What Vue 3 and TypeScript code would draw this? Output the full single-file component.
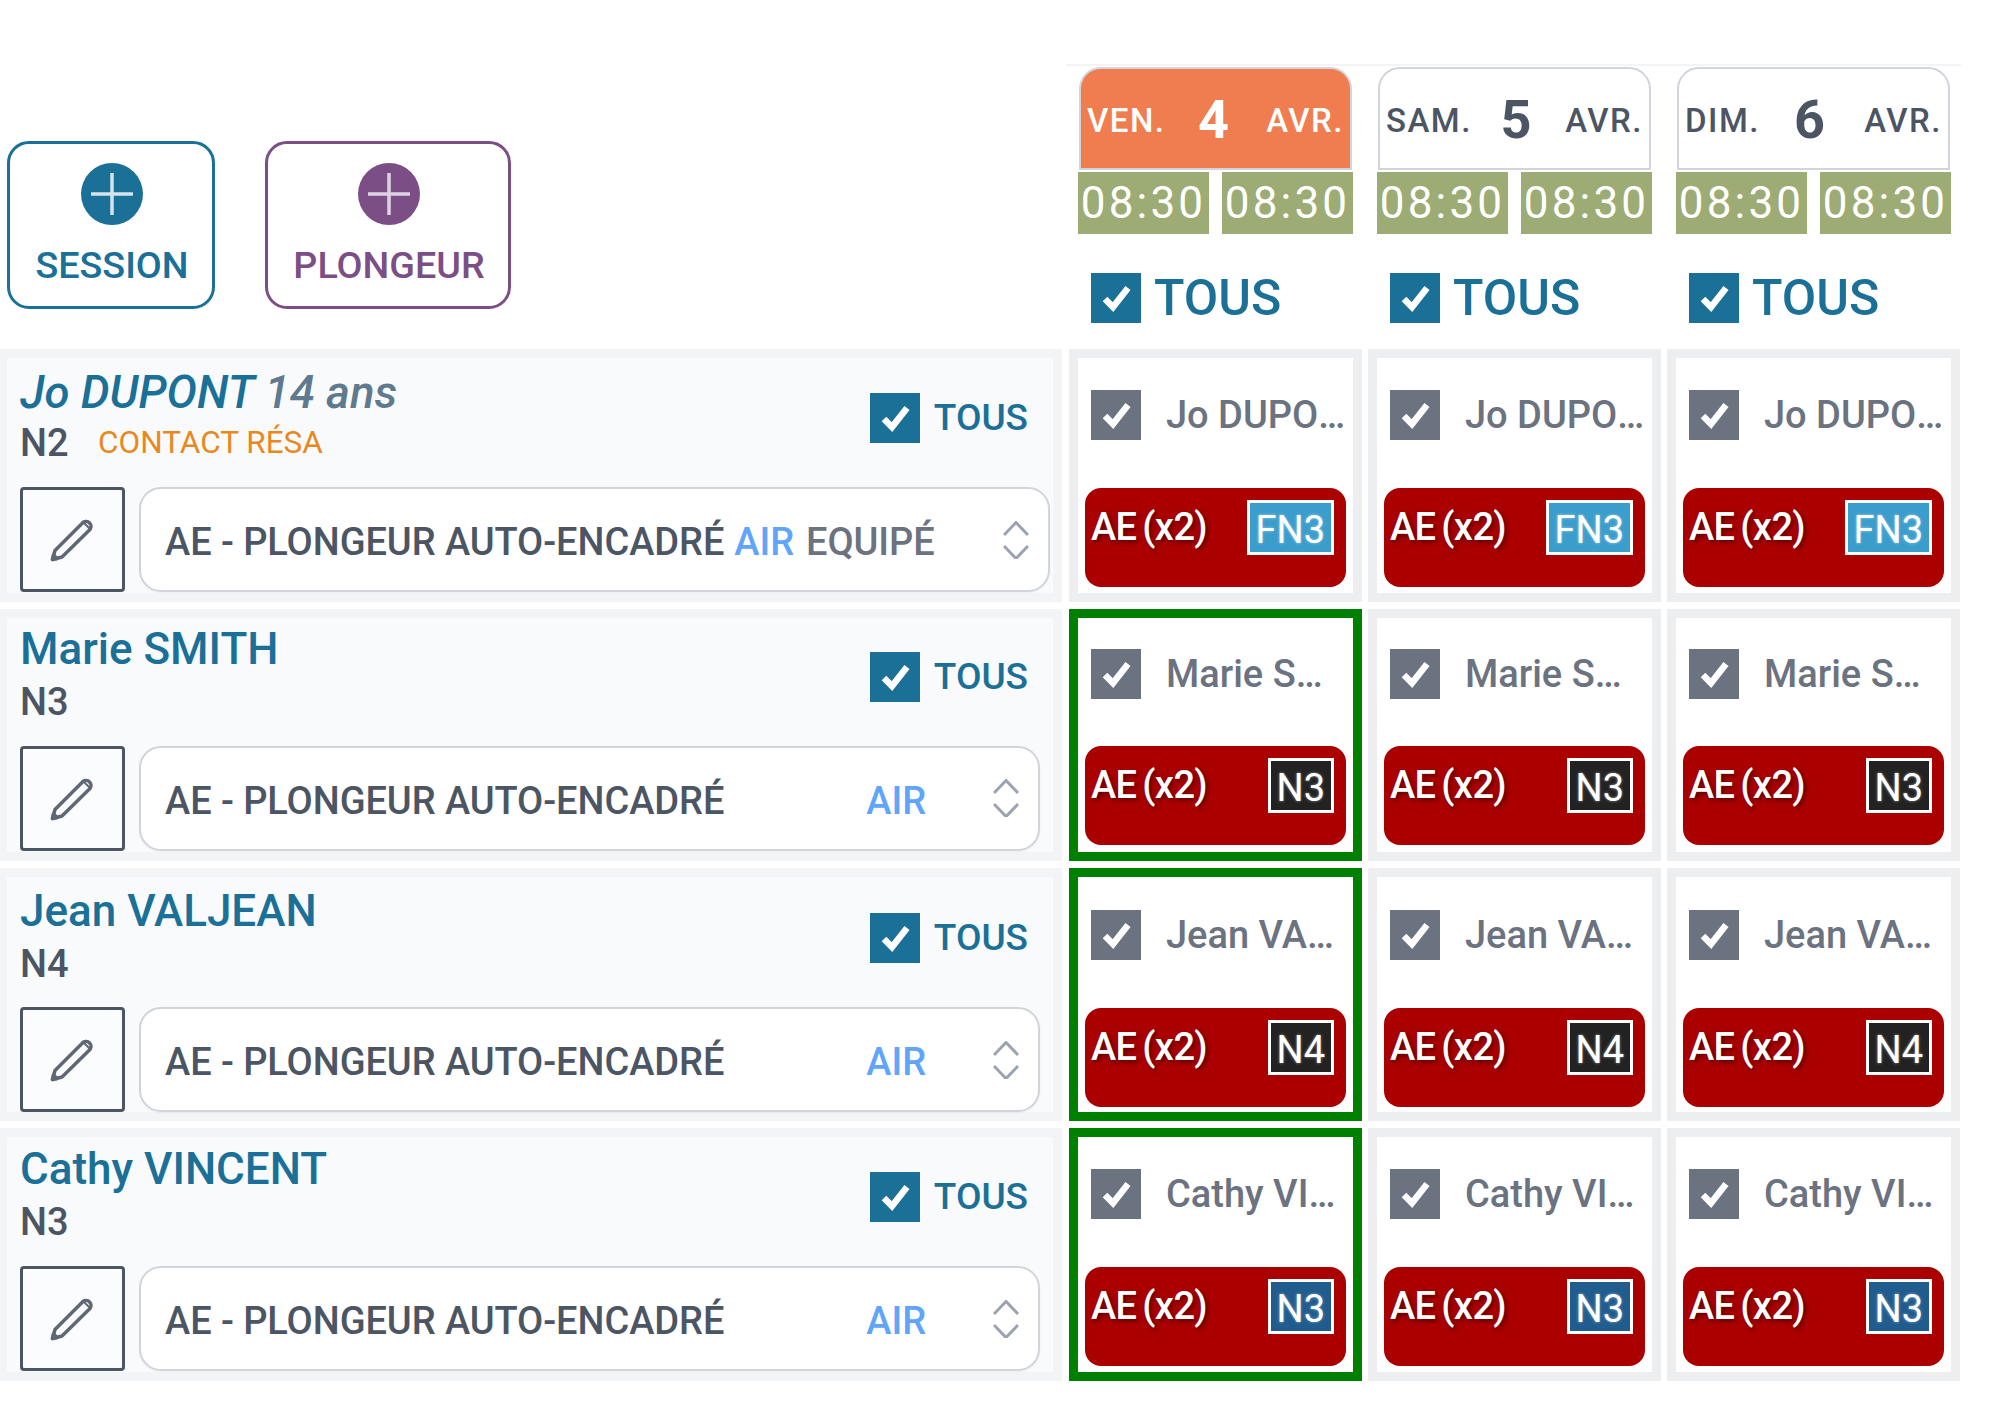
<script setup lang="ts">
interface Diver {
  name: string
  level: string
  age?: string
  contact?: string
  badge: string
  badgeClass: string
  gasExtra?: string
  selected: boolean
}

const days = [
  { label: 'VEN.', num: '4', active: true },
  { label: 'SAM.', num: '5', active: false },
  { label: 'DIM.', num: '6', active: false }
]

const divers: Diver[] = [
  { name: 'Jo DUPONT', age: '14 ans', level: 'N2', contact: 'CONTACT RÉSA', badge: 'FN3', badgeClass: 'badge-fn', gasExtra: 'EQUIPÉ', selected: false },
  { name: 'Marie SMITH', level: 'N3', badge: 'N3', badgeClass: 'badge-dark', selected: true },
  { name: 'Jean VALJEAN', level: 'N4', badge: 'N4', badgeClass: 'badge-dark', selected: true },
  { name: 'Cathy VINCENT', level: 'N3', badge: 'N3', badgeClass: 'badge-blue', selected: true }
]
</script>

<template>
  <div class="planning">
    <!-- Header -->
    <div class="head-line" />
    <div class="grid head">
      <div class="actions">
        <button class="add add-session">
          <svg class="plus" viewBox="0 0 62 62"><circle cx="31" cy="31" r="31" fill="currentColor" /><path d="M31 10v42M10 31h42" stroke="#d5e3ea" stroke-width="3.5" /></svg>
          <span>SESSION</span>
        </button>
        <button class="add add-diver">
          <svg class="plus" viewBox="0 0 62 62"><circle cx="31" cy="31" r="31" fill="currentColor" /><path d="M31 10v42M10 31h42" stroke="#ded3e2" stroke-width="3.5" /></svg>
          <span>PLONGEUR</span>
        </button>
      </div>
      <div v-for="day in days" :key="day.num" class="day-col">
        <div class="day" :class="{ active: day.active }">
          <span class="day-txt">{{ day.label }}</span>
          <span class="day-num">{{ day.num }}</span>
          <span class="day-txt">AVR.</span>
        </div>
        <div class="times">
          <span>08:30</span>
          <span>08:30</span>
        </div>
        <label class="all-day">
          <svg class="check" viewBox="0 0 50 50"><path d="M14 26l8 8 15-19" /></svg>
          TOUS
        </label>
      </div>
    </div>

    <!-- Rows -->
    <div v-for="d in divers" :key="d.name" class="grid row">
      <div class="diver">
        <div class="diver-top">
          <div class="info">
            <div v-if="d.age" class="name young">{{ d.name }} <span>{{ d.age }}</span></div>
            <div v-else class="name">{{ d.name }}</div>
            <div class="level">
              {{ d.level }}
              <span v-if="d.contact" class="contact">{{ d.contact }}</span>
            </div>
          </div>
          <label class="all-row">
            <svg class="check" viewBox="0 0 50 50"><path d="M14 26l8 8 15-19" /></svg>
            TOUS
          </label>
        </div>
        <div class="diver-bottom">
          <button class="edit">
            <svg viewBox="0 0 45 45" width="45" height="45" fill="none" stroke="#5f6774" stroke-width="3.5" stroke-linejoin="round">
              <path d="M2.500 42.500l2.500-9L33 5.500a5 5 0 0 1 7 7L12 40z" />
              <path d="M33.500 5.500l6.500 6.500" stroke-width="2" />
              <path d="M2.500 42.500l1-4.500 3.500 3.500z" fill="#5f6774" />
            </svg>
          </button>
          <div class="select" :class="{ wide: d.gasExtra }">
            <span class="type">AE - PLONGEUR AUTO-ENCADRÉ</span>
            <span class="gas">AIR</span>
            <span v-if="d.gasExtra" class="gas-extra">{{ d.gasExtra }}</span>
            <svg class="updown" viewBox="0 0 26 38" width="26" height="38" fill="none" stroke="#9ca3af" stroke-width="3">
              <path d="M1 14L13 1.500 25 14M1 25l12 12.500L25 25" />
            </svg>
          </div>
        </div>
      </div>

      <div
        v-for="(day, i) in days"
        :key="day.num"
        class="cell"
        :class="{ picked: d.selected && i === 0 }"
      >
        <div class="cell-top">
          <svg class="check grey" viewBox="0 0 50 50"><path d="M14 26l8 8 15-19" /></svg>
          <span class="cell-name">{{ d.name }}</span>
        </div>
        <div class="slot">
          <span class="slot-txt">AE (x2)</span>
          <span class="badge" :class="d.badgeClass">{{ d.badge }}</span>
        </div>
      </div>
    </div>
  </div>
</template>

<style scoped>
.planning {
  width: 2000px;
  height: 1408px;
  padding-top: 64px;
  box-sizing: border-box;
  font-family: Roboto, "Liberation Sans", sans-serif;
  font-weight: 500;
  overflow: hidden;
}

.head-line {
  height: 2px;
  width: 895px;
  margin-left: 1066px;
  background: #f3f4f6;
}

.grid {
  display: grid;
  grid-template-columns: 1063px 293px 293px 293px;
  column-gap: 6px;
}

.head {
  height: 283px;
}

.actions {
  display: flex;
  gap: 50px;
  padding: 75px 0 0 7px;
  align-items: flex-start;
}
.add {
  height: 168px;
  box-sizing: border-box;
  background: #fff;
  border: 3px solid currentColor;
  border-radius: 22px;
  font: inherit;
  font-size: 37.700px;
  line-height: 44px;
  padding: 19px 0 0 2px;
  display: flex;
  flex-direction: column;
  align-items: center;
  gap: 18px;
}
.add-session { width: 208px; color: #1a7097; }
.add-diver { width: 246px; color: #7b4f85; }
.plus { width: 62px; height: 62px; display: block; }

.day-col {
  padding: 1px 10px 0 9px;
}
.day {
  height: 103px;
  box-sizing: border-box;
  margin: 0 0 2px 1px;
  border: 2.500px solid #d1d5db;
  border-radius: 22px 22px 0 0;
  display: flex;
  justify-content: space-between;
  align-items: center;
  padding: 3px 6px 0;
  color: #4b5563;
  background: #fff;
}
.day.active {
  background: #f07d4f;
  color: #fff;
}
.day-txt {
  font-size: 33px;
  letter-spacing: 1.500px;
}
.day-num {
  font-size: 54px;
  font-weight: 700;
  line-height: 60px;
  margin-left: -5px;
}
.times {
  display: grid;
  grid-template-columns: 131px 131px;
  column-gap: 13px;
}
.times span {
  height: 62px;
  background: #9cac74;
  color: #fff;
  font-size: 44px;
  font-weight: 400;
  letter-spacing: 3.200px;
  line-height: 63px;
  text-align: center;
}
.all-day {
  display: flex;
  align-items: center;
  gap: 13px;
  margin: 38px 0 0 13px;
  font-size: 50px;
  line-height: 52px;
  color: #1a7097;
}

.check {
  width: 50px;
  height: 50px;
  flex: none;
  background: #1a7097;
  fill: none;
  stroke: #fff;
  stroke-width: 6.500;
}
.check.grey { background: #6b7280; }

.row {
  height: 252.700px;
  margin-bottom: 7px;
}

.diver {
  box-sizing: border-box;
  border: 9px solid #f3f4f6;
  border-left-width: 7px;
  margin-right: 1px;
  background: #f9fafb;
  display: flex;
  flex-direction: column;
}
.diver-top {
  height: 129px;
  display: flex;
  justify-content: space-between;
  align-items: center;
  padding: 0 25px 9px 13px;
  box-sizing: border-box;
}
.info {
  margin-bottom: 8px;
}
.name {
  font-size: 44px;
  line-height: 58px;
  color: #1a7097;
}
.name.young {
  font-size: 45.500px;
  font-style: italic;
  margin-top: 3px;
  margin-bottom: -3px;
}
.name.young span { color: #5f7a8e; }
.level {
  font-size: 38px;
  line-height: 48px;
  color: #4b5563;
}
.contact {
  font-size: 31.500px;
  font-weight: 400;
  color: #e8891f;
  margin-left: 20px;
  vertical-align: 3px;
}
.all-row {
  display: flex;
  align-items: center;
  gap: 14px;
  font-size: 37px;
  line-height: 50px;
  color: #1a7097;
}

.diver-bottom {
  display: flex;
  gap: 14px;
  padding-left: 13px;
  height: 105px;
}
.edit {
  width: 105px;
  height: 105px;
  box-sizing: border-box;
  flex: none;
  padding: 0;
  background: #fbfcfd;
  border: 3px solid #4b5563;
  border-radius: 4px;
  display: flex;
  align-items: center;
  justify-content: center;
}
.select {
  width: 901px;
  box-sizing: border-box;
  background: #fff;
  border: 2.500px solid #d1d5db;
  border-radius: 22px;
  box-shadow: 0 1px 2px rgba(0, 0, 0, 0.05);
  display: flex;
  align-items: center;
  padding: 0 20px 0 24px;
  font-size: 38px;
  letter-spacing: -0.060px;
  color: #4b5563;
}
.select.wide { width: 911px; }
.type,
.gas,
.gas-extra {
  padding-top: 5px;
}
.gas {
  color: #60a5fa;
  margin-left: auto;
  margin-right: 67px;
}
.select.wide .gas {
  margin-left: 10px;
  margin-right: 12px;
}
.gas-extra {
  color: #6b7280;
  margin-right: auto;
}
.updown { flex: none; margin-right: -1px; }

.cell {
  box-sizing: border-box;
  border: 9px solid #eceef0;
  background: #fff;
  padding: 32px 7px 6px 7px;
  display: flex;
  flex-direction: column;
  justify-content: space-between;
  min-width: 0;
}
.cell.picked { border-color: #008000; }
.cell-top {
  display: flex;
  align-items: center;
  gap: 25px;
  padding-left: 6px;
  min-width: 0;
}
.cell-name {
  font-size: 38px;
  line-height: 50px;
  color: #6b7280;
  white-space: nowrap;
  overflow: hidden;
  text-overflow: ellipsis;
  min-width: 0;
}
.slot {
  height: 99px;
  box-sizing: border-box;
  background: #aa0000;
  border-radius: 16px;
  display: flex;
  justify-content: space-between;
  align-items: flex-start;
  padding: 12px 12px 0 6px;
  color: #fff;
}
.slot-txt {
  font-size: 38px;
  font-weight: 500;
  letter-spacing: -0.600px;
  word-spacing: -3px;
  line-height: 54px;
  text-shadow: 2px 2px 4px rgba(0, 0, 0, 0.5);
}
.badge {
  height: 55px;
  box-sizing: border-box;
  border: 3px solid #fff;
  padding: 0 6px;
  font-size: 38px;
  font-weight: 400;
  line-height: 54px;
  text-shadow: 0 0 3px rgba(255, 255, 255, 0.5);
}
.badge-fn { background: #3b9dcc; }
.badge-dark { background: #222; }
.badge-blue { background: #215c8f; }

/* row heights land on fractional pixels in the original: contents sit 1px off */
.row:nth-child(4) .diver-top { height: 128px; }
.row:nth-child(4) .info { margin-bottom: 9px; }
.row:nth-child(4) .cell { padding-top: 31px; padding-bottom: 7px; }
.row:nth-child(5) .diver-top { height: 130px; }
.row:nth-child(5) .diver-bottom { margin-bottom: -1px; }
.row:nth-child(5) .info { margin-bottom: 5px; }
.row:nth-child(5) .cell { padding-top: 33px; padding-bottom: 5px; }
</style>

<style>
body {
  background: #fff;
}
</style>
